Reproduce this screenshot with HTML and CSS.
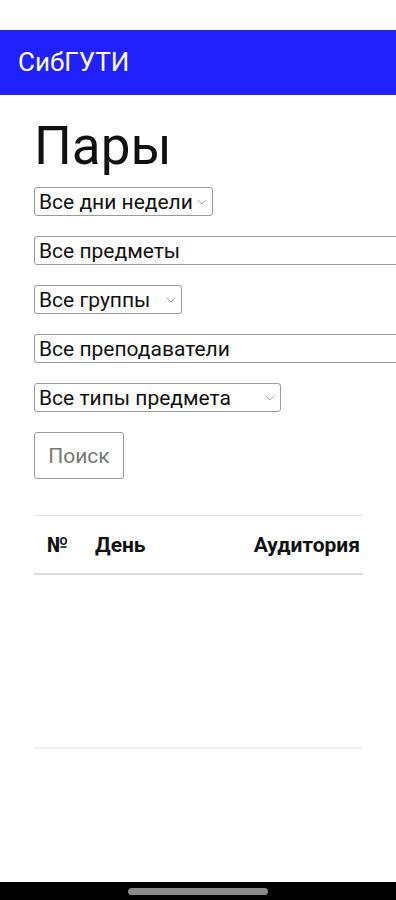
FILE: index.html
```html
<!DOCTYPE html>
<html lang="ru">
<head>
  <meta charset="UTF-8">
  <title>СибГУТИ — Пары</title>
  <link rel="stylesheet" href="styles.css">
</head>
<body>

  <div class="status"></div>
  <header class="appbar">СибГУТИ</header>

  <main class="page">
    <h1>Пары</h1>

    <form class="filters">
      <select class="sel sel-days">
        <option>Все дни недели</option>
      </select>
      <select class="sel sel-wide">
        <option>Все предметы</option>
      </select>
      <select class="sel sel-groups">
        <option>Все группы</option>
      </select>
      <select class="sel sel-wide">
        <option>Все преподаватели</option>
      </select>
      <select class="sel sel-types">
        <option>Все типы предмета</option>
      </select>
      <button type="button" class="search">Поиск</button>
    </form>

    <table class="pairs">
      <thead>
        <tr>
          <th class="col-num">№</th>
          <th class="col-day">День</th>
          <th class="col-room">Аудитория</th>
        </tr>
      </thead>
      <tbody>
        <tr class="empty"><td colspan="3"></td></tr>
      </tbody>
    </table>
  </main>

  <div class="navbar"><span class="pill"></span></div>

</body>
</html>
```

FILE: styles.css
```css
html, body {
  margin: 0;
  height: 100%;
  background: #fff;
  overflow: hidden;
}
body {
  font-family: Roboto, 'Noto Sans', sans-serif;
  color: #111;
  position: relative;
}
.status {
  height: 30px;
}
.appbar {
  height: 65px;
  background: #2121ff;
  color: #fff;
  font-size: 26px;
  line-height: 65px;
  padding-left: 18px;
}
.page {
  padding: 0 0 0 34px;
}
h1 {
  font-size: 53px;
  font-weight: 400;
  margin: 20px 0 0;
  line-height: 62px;
}
.filters {
  display: flex;
  flex-direction: column;
  align-items: flex-start;
  gap: 20px;
  margin-top: 10px;
}
.sel {
  font-family: Roboto, 'Noto Sans', sans-serif;
  font-size: 21px;
  color: #111;
  height: 29px;
  padding: 0 4px;
  background: #fff;
  border: 1px solid #9a9a9a;
  border-radius: 3px;
  appearance: none;
  background-image: url("data:image/svg+xml,%3Csvg xmlns='http://www.w3.org/2000/svg' width='10' height='6'%3E%3Cpath d='M1 1l4 4 4-4' fill='none' stroke='%23aaa' stroke-width='1'/%3E%3C/svg%3E");
  background-repeat: no-repeat;
  background-position: right 5px center;
}
.sel-days { width: 179px; }
.sel-groups { width: 148px; }
.sel-types { width: 247px; }
.sel-wide {
  width: 380px;
  background-image: none;
}
.search {
  font-family: Roboto, 'Noto Sans', sans-serif;
  font-size: 21px;
  color: #777;
  background: #fff;
  border: 1px solid #9a9a9a;
  border-radius: 3px;
  width: 90px;
  height: 47px;
}
.pairs {
  width: 329px;
  border-collapse: collapse;
  margin-top: 36px;
  font-size: 21px;
}
.pairs thead tr {
  border-top: 1px solid #e6e6e6;
  border-bottom: 2px solid #dcdcdc;
}
.pairs th {
  height: 57px;
  padding: 0;
  font-weight: 700;
  text-align: left;
}
.col-num { width: 48px; padding-left: 13px !important; }
.col-day { text-align: left; }
.col-room { text-align: right !important; padding-right: 3px !important; }
.pairs .empty td {
  height: 170px;
  border-bottom: 2px solid #f2f2f2;
}
.navbar {
  position: absolute;
  left: 0;
  right: 0;
  bottom: 0;
  height: 18px;
  background: #000;
}
.pill {
  position: absolute;
  left: 128px;
  top: 6px;
  width: 140px;
  height: 7px;
  border-radius: 4px;
  background: #8a8a8a;
}
```
